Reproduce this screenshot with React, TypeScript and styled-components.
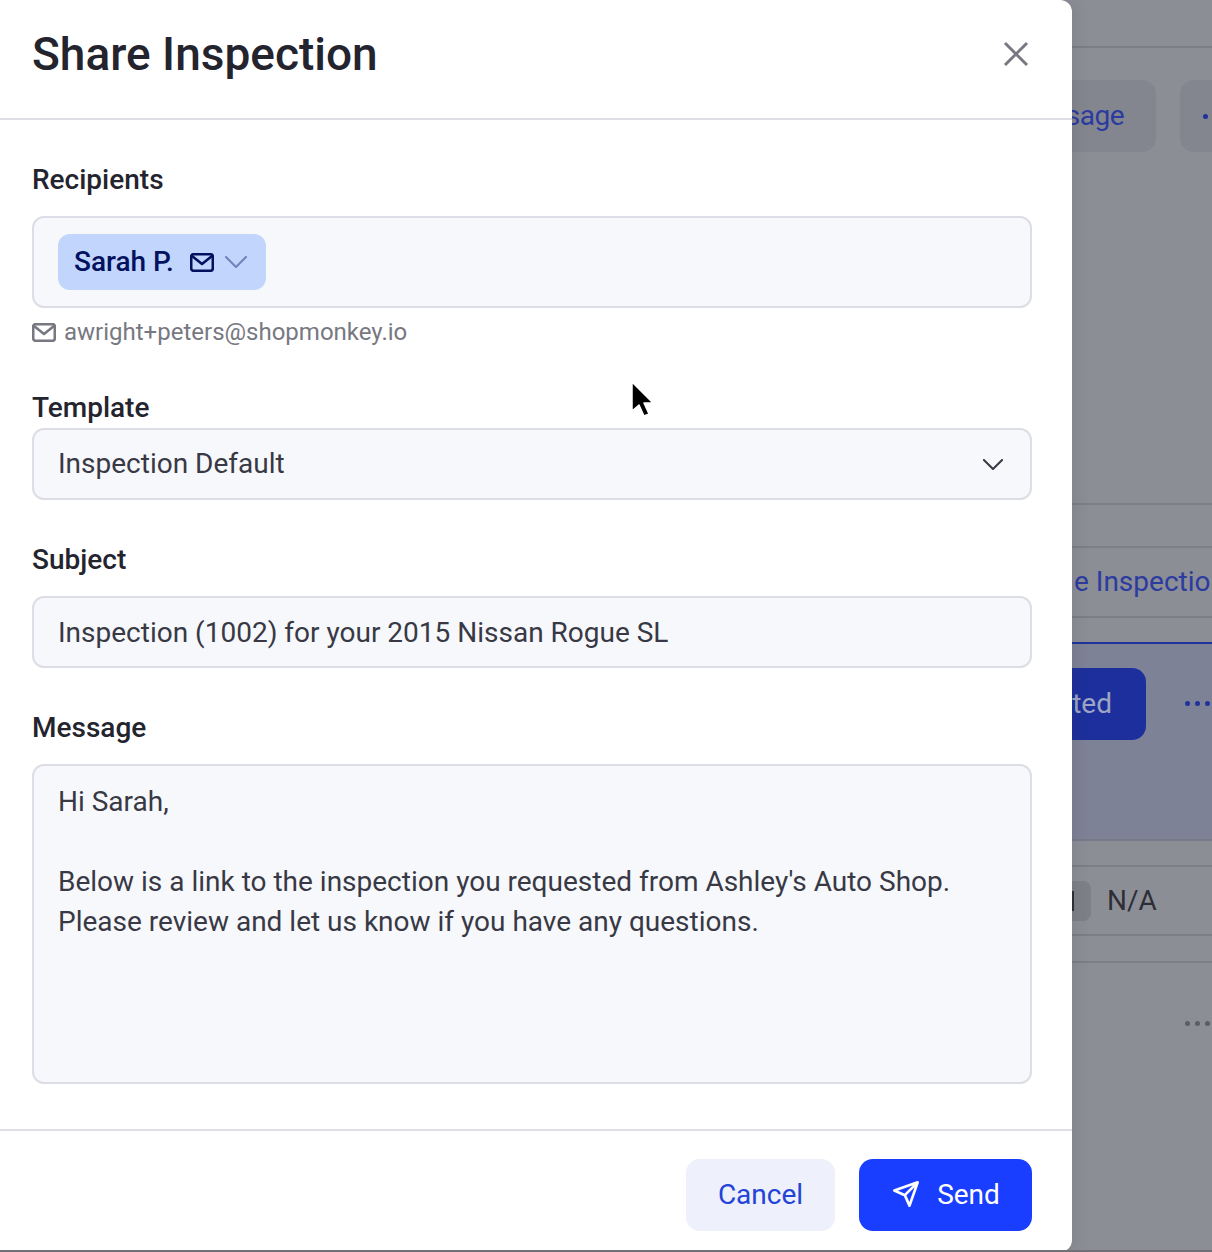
import styled, { createGlobalStyle } from 'styled-components';

const GlobalStyle = createGlobalStyle`
  html, body {
    margin: 0;
    padding: 0;
    background: #8c8e96;
  }
  * {
    box-sizing: border-box;
  }
`;

const Page = styled.div`
  position: relative;
  display: flex;
  width: 1212px;
  height: 1252px;
  overflow: hidden;
  font-family: Roboto, "Liberation Sans", sans-serif;
  background: #8c8e96;
  border-bottom: 2px solid #6f7075;
`;

const Modal = styled.div`
  position: relative;
  z-index: 1;
  display: flex;
  flex-direction: column;
  flex: none;
  width: 1072px;
  height: 1252px;
  background: #fff;
  border-radius: 0 12px 12px 0;
  box-shadow: 4px 0 14px rgba(60, 50, 70, 0.12);
`;

const Header = styled.header`
  display: flex;
  align-items: center;
  justify-content: space-between;
  height: 120px;
  padding: 0 40px 10px 32px;
  border-bottom: 2px solid #dfdfe8;
`;

const Title = styled.h1`
  margin: 0;
  font-size: 46px;
  font-weight: 500;
  line-height: 56px;
  color: #23242e;
`;

const CloseButton = styled.button`
  display: flex;
  padding: 0;
  border: none;
  background: none;
  color: #777881;
`;

const Body = styled.div`
  flex: 1;
  display: flex;
  flex-direction: column;
  gap: 44px;
  padding: 44px 40px 0 32px;
`;

const Field = styled.div`
  display: flex;
  flex-direction: column;
`;

const Label = styled.label<{ $gap: number }>`
  margin-bottom: ${({ $gap }) => $gap}px;
  font-size: 28px;
  font-weight: 500;
  line-height: 32px;
  color: #23242e;
`;

const RecipientBox = styled.div`
  display: flex;
  align-items: center;
  height: 92px;
  padding: 0 24px;
  background: #f6f8fc;
  border: 2px solid #dcdde6;
  border-radius: 12px;
`;

const Chip = styled.div`
  display: flex;
  align-items: center;
  height: 56px;
  padding: 0 19px 2px 16px;
  background: #c2d5fd;
  border-radius: 12px;
  color: #03125f;
  font-size: 28px;
  font-weight: 500;
`;

const ChipMail = styled.span`
  display: flex;
  margin: 2px 0 0 16px;
`;

const ChipCaret = styled.span`
  display: flex;
  margin: 2px 0 0 11px;
  color: #7384bd;
`;

const Hint = styled.div`
  display: flex;
  align-items: center;
  gap: 8px;
  height: 32px;
  margin-top: 8px;
  font-size: 24px;
  color: #777881;
`;

const Control = styled.div<{ $select?: boolean }>`
  display: flex;
  align-items: center;
  justify-content: space-between;
  height: 72px;
  padding: 0 27px ${({ $select }) => ($select ? 2 : 0)}px 24px;
  background: #f6f8fc;
  border: 2px solid #dcdde6;
  border-radius: 12px;
  font-size: 28px;
  color: #383944;

  svg {
    margin-top: 2px;
  }
`;

const MessageArea = styled.textarea`
  display: block;
  width: 100%;
  height: 320px;
  padding: 16px 24px;
  resize: none;
  outline: none;
  background: #f6f8fc;
  border: 2px solid #dcdde6;
  border-radius: 12px;
  font-family: inherit;
  font-size: 28px;
  line-height: 40px;
  color: #383944;
`;

const Footer = styled.footer`
  display: flex;
  justify-content: flex-end;
  gap: 24px;
  height: 123px;
  padding: 28px 40px 0 0;
  border-top: 2px solid #dfdfe8;
`;

const Button = styled.button<{ $primary?: boolean }>`
  display: flex;
  align-items: center;
  justify-content: center;
  gap: 17px;
  height: 72px;
  width: ${({ $primary }) => ($primary ? 173 : 149)}px;
  padding: 0 0 2px ${({ $primary }) => ($primary ? 1 : 0)}px;
  border: none;
  border-radius: 14px;
  background: ${({ $primary }) => ($primary ? '#1a3eff' : '#eef0fb')};
  color: ${({ $primary }) => ($primary ? '#ffffff' : '#2344d6')};
  font-family: inherit;
  font-size: 28px;
`;

const Backdrop = styled.div`
  flex: 1;
  min-width: 0;
  display: flex;
  flex-direction: column;
  overflow: hidden;
`;

const Band = styled.div<{ $h: number; $line?: string }>`
  flex: none;
  display: flex;
  align-items: center;
  height: ${({ $h }) => $h}px;
  border-bottom: 2px solid ${({ $line }) => $line || '#7d7e88'};
`;

const Gap = styled.div<{ $h: number }>`
  flex: none;
  height: ${({ $h }) => $h}px;
`;

const GhostRow = styled.div`
  flex: none;
  display: flex;
  gap: 24px;
  height: 72px;
  margin-top: 32px;
`;

const GhostButton = styled.div<{ $w: number }>`
  flex: none;
  display: flex;
  align-items: center;
  justify-content: flex-end;
  width: ${({ $w }) => $w}px;
  padding: 0 32px 2px 0;
  border-radius: 0 14px 14px 0;
  background: #84868f;
  color: #2b3b9f;
  font-size: 28px;
  letter-spacing: -0.5px;
`;

const GhostMenu = styled.div`
  flex: none;
  width: 60px;
  padding: 0 0 0 23px;
  border-radius: 14px 0 0 14px;
  background: #84868f;
`;

const GhostLink = styled.div`
  flex: none;
  padding: 0 0 2px 2px;
  white-space: nowrap;
  color: #2b3b9f;
  font-size: 28px;
`;

const TintPanel = styled.div`
  flex: none;
  display: flex;
  height: 197px;
  padding-top: 24px;
  background: #7d8296;
  border-bottom: 2px solid #777a88;
`;

const StatusButton = styled.div`
  flex: none;
  display: flex;
  align-items: center;
  justify-content: flex-end;
  width: 74px;
  height: 72px;
  padding: 0 34px 2px 0;
  border-radius: 0 14px 14px 0;
  background: #1c2f9c;
  color: #9ea5c5;
  font-size: 28px;
`;

const Dots = styled.div<{ $color: string; $left: number; $top: number }>`
  display: flex;
  gap: 5px;
  height: 5px;
  margin: ${({ $top }) => $top}px 0 0 ${({ $left }) => $left}px;
  span {
    flex: none;
    width: 5px;
    height: 5px;
    border-radius: 50%;
    background: ${({ $color }) => $color};
  }
`;

const ValueChip = styled.div`
  flex: none;
  display: flex;
  align-items: center;
  width: 19px;
  height: 40px;
  border-radius: 0 8px 8px 0;
  background: #7e8089;
  &::before {
    content: '';
    width: 2px;
    height: 20px;
    background: #2d2e38;
  }
`;

const ValueText = styled.div`
  margin-left: 16px;
  color: #2d2e38;
  font-size: 28px;
`;

const Cursor = styled.svg`
  position: absolute;
  z-index: 2;
  left: 628px;
  top: 379px;
`;

function MailIcon({ color, stroke }: { color: string; stroke: number }) {
  return (
    <svg width="24" height="19" viewBox="0 0 24 19" fill="none" stroke={color} strokeWidth={stroke} strokeLinejoin="round" strokeLinecap="round">
      <rect x="1.2" y="1.2" width="21.6" height="16.6" rx="2.5" />
      <path d="M2 3l10 8 10-8" />
    </svg>
  );
}

function Caret({ size }: { size: number }) {
  return (
    <svg width={size} height={size * 0.55} viewBox="0 0 22 12" fill="none" stroke="currentColor" strokeWidth="2.2" strokeLinecap="round" strokeLinejoin="round">
      <path d="M1 1l10 10L21 1" />
    </svg>
  );
}

function ThreeDots({ color, left, top }: { color: string; left: number; top: number }) {
  return (
    <Dots $color={color} $left={left} $top={top}>
      <span />
      <span />
      <span />
    </Dots>
  );
}

export default function App() {
  return (
    <Page>
      <GlobalStyle />
      <Modal>
        <Header>
          <Title>Share Inspection</Title>
          <CloseButton aria-label="Close">
            <svg width="32" height="32" viewBox="0 0 32 32" fill="none" stroke="currentColor" strokeWidth="3">
              <path d="M5 5l22 22M27 5L5 27" />
            </svg>
          </CloseButton>
        </Header>
        <Body>
          <Field>
            <Label $gap={20}>Recipients</Label>
            <RecipientBox>
              <Chip>
                Sarah P.
                <ChipMail>
                  <MailIcon color="#03125f" stroke={2.6} />
                </ChipMail>
                <ChipCaret>
                  <Caret size={22} />
                </ChipCaret>
              </Chip>
            </RecipientBox>
            <Hint>
              <MailIcon color="#777881" stroke={2.6} />
              awright+peters@shopmonkey.io
            </Hint>
          </Field>
          <Field>
            <Label $gap={4}>Template</Label>
            <Control $select>
              Inspection Default
              <Caret size={20} />
            </Control>
          </Field>
          <Field>
            <Label $gap={20}>Subject</Label>
            <Control>Inspection (1002) for your 2015 Nissan Rogue SL</Control>
          </Field>
          <Field>
            <Label $gap={20}>Message</Label>
            <MessageArea
              readOnly
              defaultValue={"Hi Sarah,\n\nBelow is a link to the inspection you requested from Ashley's Auto Shop.\nPlease review and let us know if you have any questions."}
            />
          </Field>
        </Body>
        <Footer>
          <Button>Cancel</Button>
          <Button $primary>
            <svg width="28" height="28" viewBox="0 0 24 24" fill="none" stroke="currentColor" strokeWidth="2.3" strokeLinecap="round" strokeLinejoin="round">
              <path d="M22 2L11 13M22 2l-7 20-4-9-9-4z" />
            </svg>
            Send
          </Button>
        </Footer>
      </Modal>
      <Backdrop>
        <Band $h={48} />
        <GhostRow>
          <GhostButton $w={84}>sage</GhostButton>
          <GhostMenu>
            <ThreeDots color="#20339c" left={0} top={34} />
          </GhostMenu>
        </GhostRow>
        <Gap $h={351} />
        <Band $h={2} />
        <Band $h={43} />
        <Band $h={70}>
          <GhostLink>e Inspectio</GhostLink>
        </Band>
        <Band $h={26} $line="#20339c" />
        <TintPanel>
          <StatusButton>ted</StatusButton>
          <ThreeDots color="#20339c" left={39} top={33} />
        </TintPanel>
        <Band $h={26} />
        <Band $h={69}>
          <ValueChip />
          <ValueText>N/A</ValueText>
        </Band>
        <Band $h={27} />
        <ThreeDots color="#5c5d67" left={113} top={58} />
      </Backdrop>
      <Cursor width="30" height="40" viewBox="0 0 30 40">
        <path d="M4 3v29l7-6 5 11 5-2-5-11h9z" fill="#000" stroke="#fff" strokeWidth="1.5" strokeLinejoin="round" />
      </Cursor>
    </Page>
  );
}
